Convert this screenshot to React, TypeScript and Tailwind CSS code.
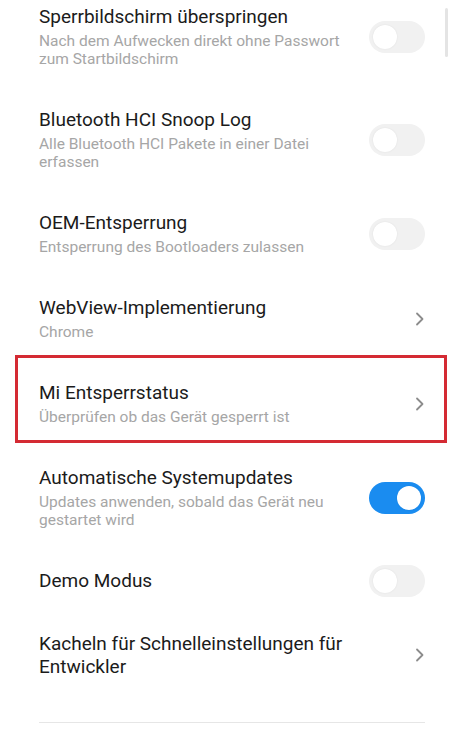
import React from 'react'

type Row = {
  title: string
  subtitle?: string
  control: 'off' | 'on' | 'chevron'
  highlight?: boolean
}

const rows: Row[] = [
  {
    title: 'Sperrbildschirm überspringen',
    subtitle: 'Nach dem Aufwecken direkt ohne Passwort zum Startbildschirm',
    control: 'off',
  },
  {
    title: 'Bluetooth HCI Snoop Log',
    subtitle: 'Alle Bluetooth HCI Pakete in einer Datei erfassen',
    control: 'off',
  },
  { title: 'OEM-Entsperrung', subtitle: 'Entsperrung des Bootloaders zulassen', control: 'off' },
  { title: 'WebView-Implementierung', subtitle: 'Chrome', control: 'chevron' },
  {
    title: 'Mi Entsperrstatus',
    subtitle: 'Überprüfen ob das Gerät gesperrt ist',
    control: 'chevron',
    highlight: true,
  },
  {
    title: 'Automatische Systemupdates',
    subtitle: 'Updates anwenden, sobald das Gerät neu gestartet wird',
    control: 'on',
  },
  { title: 'Demo Modus', control: 'off' },
  { title: 'Kacheln für Schnelleinstellungen für Entwickler', control: 'chevron' },
]

function Toggle({ on }: { on: boolean }) {
  return (
    <div
      className={`-my-[6px] flex h-[32px] w-[56px] shrink-0 items-center rounded-full px-[4px] ${
        on ? 'justify-end bg-[#1a8cf0]' : 'justify-start bg-[#f1f1f1]'
      }`}
    >
      <div className="h-[24px] w-[24px] rounded-full bg-white shadow-[0_0_2px_rgba(0,0,0,0.08)]" />
    </div>
  )
}

function Chevron() {
  return (
    <div className="flex w-[56px] shrink-0 justify-end">
      <svg width="10" height="14" viewBox="0 0 10 14" fill="none">
        <path d="M2 1.5 L7.5 7 L2 12.5" stroke="#8c8c8c" strokeWidth="1.8" strokeLinecap="round" strokeLinejoin="round" />
      </svg>
    </div>
  )
}

export default function App() {
  return (
    <div className="relative h-[741px] w-[450px] overflow-hidden bg-white font-['Roboto',sans-serif]">
      <div className="-mt-[15px] flex flex-col">
        {rows.map((row) => (
          <div key={row.title} className="relative flex items-center gap-[20px] py-[20px] pl-[39px] pr-[25px]">
            <div className="min-w-0 flex-1">
              <div className="text-[19px] leading-[23px] text-[#1b1b1b]">{row.title}</div>
              {row.subtitle && (
                <div className="mt-[4px] text-[15.5px] leading-[18px] text-[#a6a6a6]">{row.subtitle}</div>
              )}
            </div>
            {row.control === 'chevron' ? <Chevron /> : <Toggle on={row.control === 'on'} />}
            {row.highlight && (
              <div className="pointer-events-none absolute left-[15px] right-[3px] top-[-6px] bottom-[3px] border-[3px] border-[#d42a33]" />
            )}
          </div>
        ))}
      </div>
      <div className="ml-[39px] mr-[25px] mt-[24px] h-px bg-[#e6e6e6]" />
      <div className="absolute right-[2px] top-[8px] h-[49px] w-[3px] rounded-full bg-[#e4e4e4]" />
    </div>
  )
}
